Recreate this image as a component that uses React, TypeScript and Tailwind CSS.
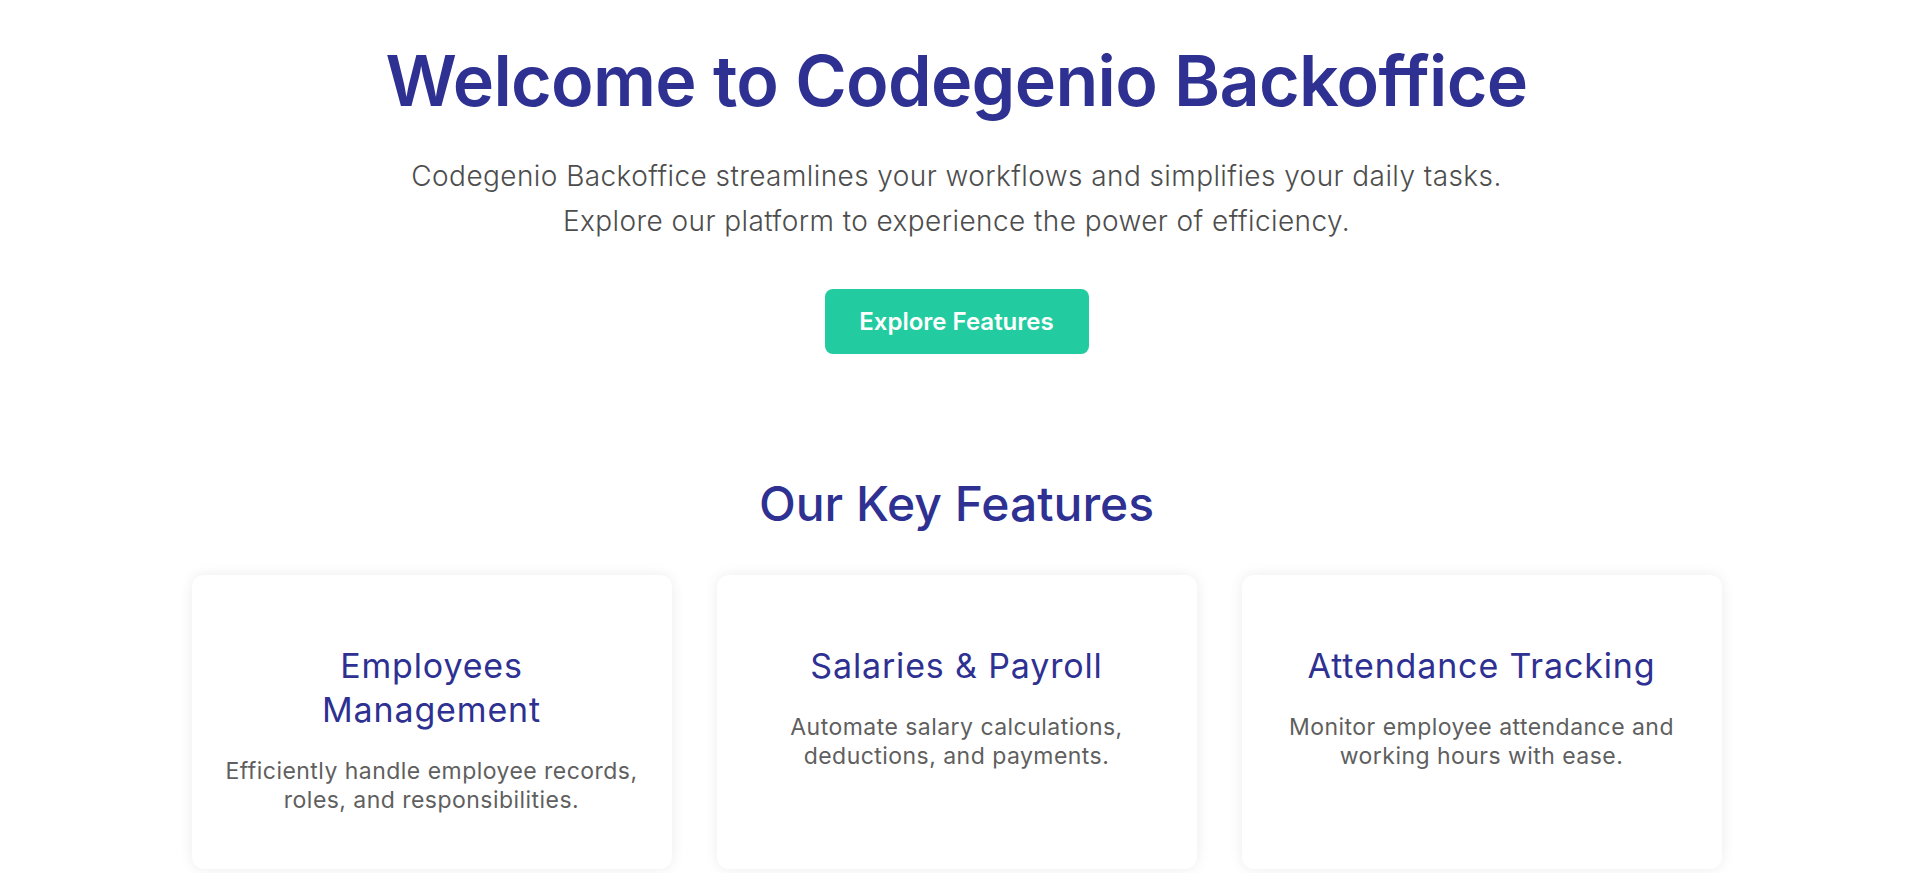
export default function App() {
  const features = [
    {
      title: "Employees Management",
      description: "Efficiently handle employee records, roles, and responsibilities.",
    },
    {
      title: "Salaries & Payroll",
      description: "Automate salary calculations, deductions, and payments.",
    },
    {
      title: "Attendance Tracking",
      description: "Monitor employee attendance and working hours with ease.",
    },
  ]

  return (
    <div className="min-h-screen bg-white pl-[5px] font-['Inter',sans-serif] overflow-hidden">
      <section className="flex flex-col items-center pt-[46px] text-center">
        <h1 className="text-[70px] leading-none font-semibold text-[#2e3192] tracking-[-0.01em]">
          Welcome to Codegenio Backoffice
        </h1>
        <p className="mt-[38px] text-[28px] leading-[45px] text-[#4d4d4d] font-light tracking-[0.015em]">
          Codegenio Backoffice streamlines your workflows and simplifies your daily tasks.
          <br />
          Explore our platform to experience the power of efficiency.
        </p>
        <button className="mt-[45px] w-[264px] h-[65px] rounded-lg bg-[#23cca0] text-white text-[24px] font-semibold">
          Explore Features
        </button>
      </section>

      <section className="flex flex-col items-center mt-[126px]">
        <h2 className="text-[48px] leading-none font-medium text-[#2e3192]">Our Key Features</h2>
        <div className="mt-[47px] grid grid-cols-3 gap-[45px] w-[1530px]">
          {features.map((f) => (
            <div
              key={f.title}
              className="bg-white rounded-xl shadow-[0_0_14px_rgba(0,0,0,0.08)] px-[30px] pt-[69px] pb-[54px] text-center"
            >
              <h3 className="mx-auto max-w-[400px] text-[34px] leading-[44px] tracking-[0.025em] text-[#2e3192]">
                {f.title}
              </h3>
              <p className="mt-[25px] text-[23px] leading-[29px] tracking-[0.02em] text-[#5f5f5f]">
                {f.description}
              </p>
            </div>
          ))}
        </div>
      </section>
    </div>
  )
}
